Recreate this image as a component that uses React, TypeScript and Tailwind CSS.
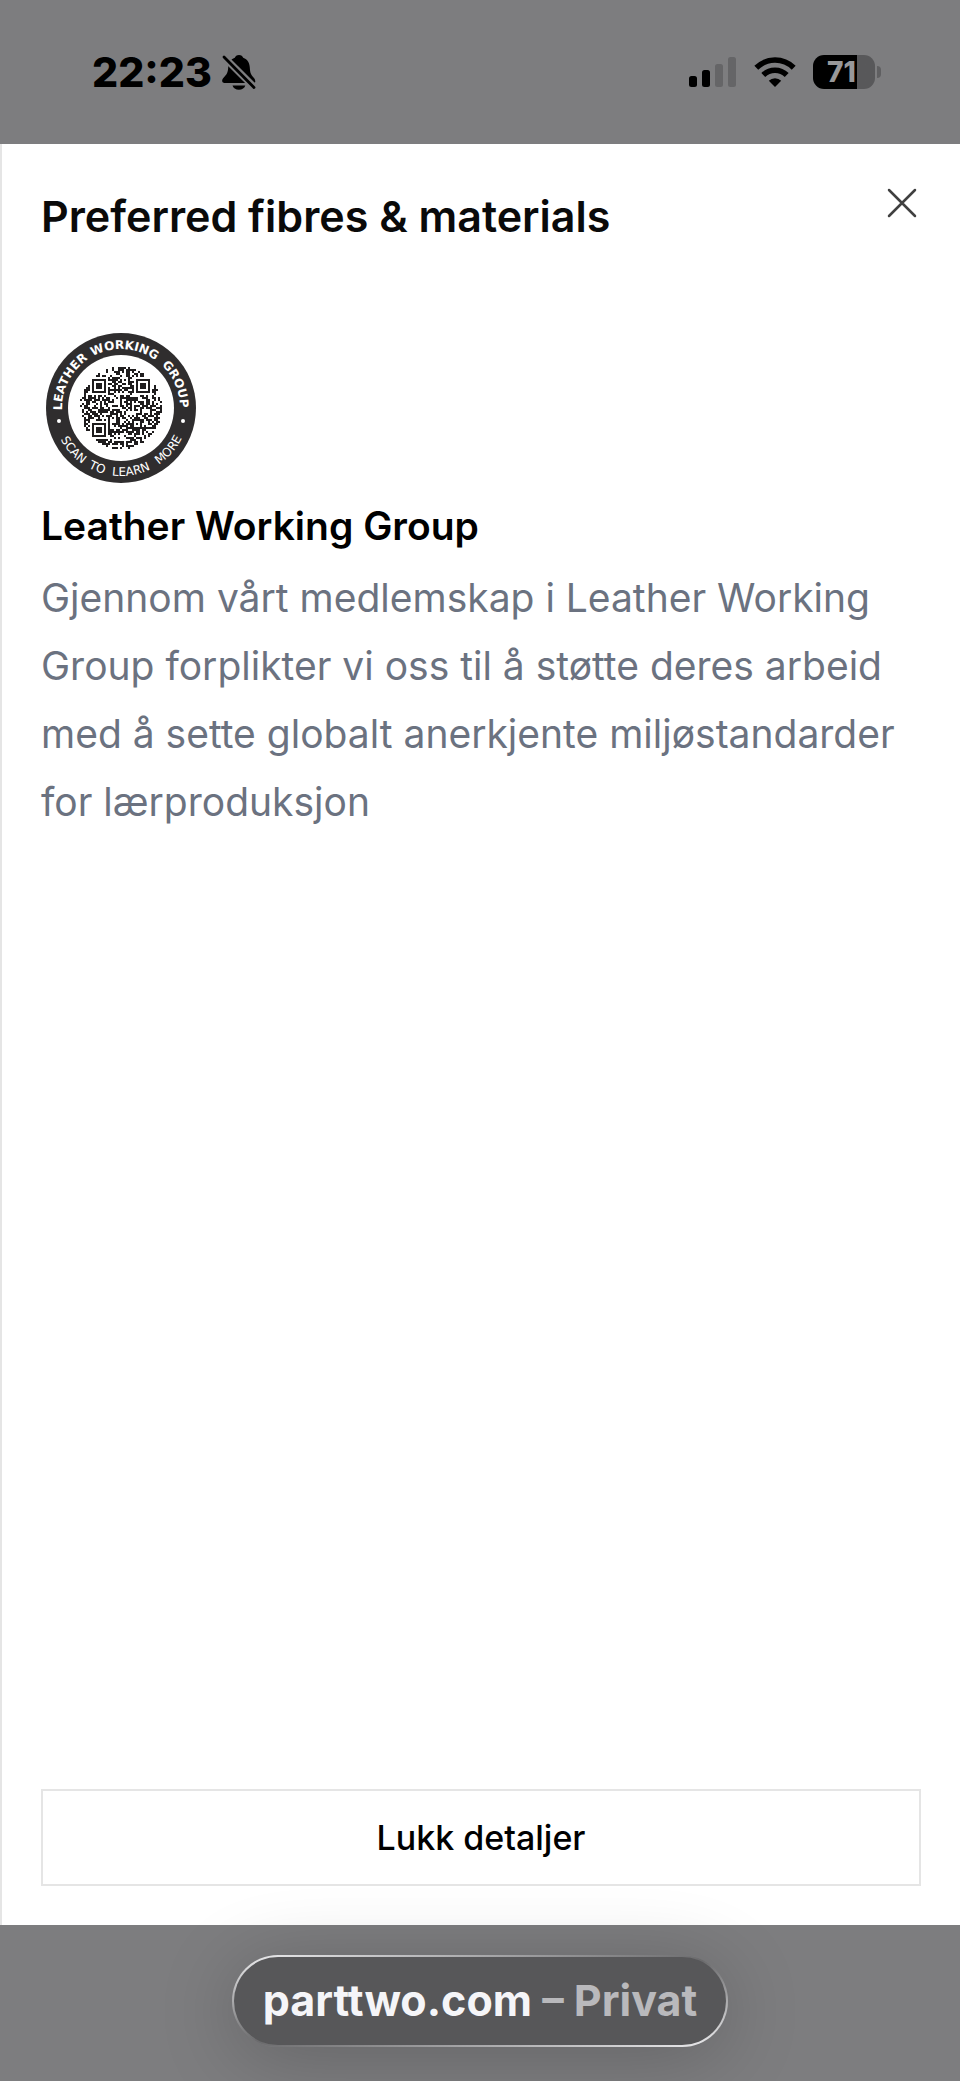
import React from 'react';

const QR_SIZE = 29;
const QR_MODULE = 2;
const QR_RADIUS = 41;

const FINDERS = [
    { x: 0, y: 0 },
    { x: 22, y: 0 },
    { x: 0, y: 22 },
];

// Returns null when the module is outside of the finder / alignment patterns
const patternModule = (col: number, row: number): boolean | null => {
    for (const f of FINDERS) {
        const d = Math.max(Math.abs(col - f.x - 3), Math.abs(row - f.y - 3));
        if (d <= 4) return d !== 2 && d !== 4;
    }
    const d = Math.max(Math.abs(col - 22), Math.abs(row - 22));
    if (d <= 2) return d !== 1;
    return null;
};

const buildQrPath = () => {
    let seed = 20;
    let path = '';
    for (let row = -7; row < QR_SIZE + 7; row++) {
        for (let col = -7; col < QR_SIZE + 7; col++) {
            seed = (seed * 1103515245 + 12345) % 2147483648;
            const x = 76 + (col - QR_SIZE / 2) * QR_MODULE;
            const y = 76 + (row - QR_SIZE / 2) * QR_MODULE;
            if (Math.hypot(x + 1 - 76, y + 1 - 76) > QR_RADIUS) continue;
            const dark = patternModule(col, row) ?? seed / 2147483648 < 0.54;
            if (dark) path += `M${x} ${y}h2v2h-2z`;
        }
    }
    return path;
};

const qrPath = buildQrPath();

const topWords = [
    { text: 'LEATHER', offset: '15%' },
    { text: 'WORKING', offset: '52%' },
    { text: 'GROUP', offset: '87%' },
];

const bottomWords = [
    { text: 'SCAN', offset: '23%' },
    { text: 'TO', offset: '38%' },
    { text: 'LEARN', offset: '55%' },
    { text: 'MORE', offset: '77%' },
];

const LeatherWorkingGroupLogo: React.FC = () => (
    <svg viewBox="0 0 152 152" className="size-[152px]" role="img" aria-label="Leather Working Group">
        <defs>
            <path id="lwg-top" d="M17 76A59 59 0 0 1 135 76" />
            <path id="lwg-bottom" d="M8 76A68 68 0 0 0 144 76" />
        </defs>
        <circle cx="76" cy="76" r="75" fill="#2f2d2e" />
        <circle cx="76" cy="76" r="53" fill="#fff" />
        <path d={qrPath} fill="#1f1d1e" shapeRendering="crispEdges" />
        <g fill="#fff" fontFamily="'DejaVu Sans', sans-serif" fontSize="12" textAnchor="middle">
            {topWords.map(word => (
                <text key={word.text} fontWeight="700">
                    <textPath href="#lwg-top" startOffset={word.offset}>{word.text}</textPath>
                </text>
            ))}
            {bottomWords.map(word => (
                <text key={word.text}>
                    <textPath href="#lwg-bottom" startOffset={word.offset}>{word.text}</textPath>
                </text>
            ))}
        </g>
        <circle cx="14" cy="89" r="2" fill="#fff" />
        <circle cx="138" cy="89" r="2" fill="#fff" />
    </svg>
);

const BellOffIcon: React.FC = () => (
    <svg viewBox="0 0 34 36" className="h-9 w-[34px]" aria-hidden="true">
        <path d="M17 1c-2.300 0-3.600 1.200-4.200 2.700C8.400 5.300 6.500 9 6.200 13.500 5.900 19 4.500 20.500 2 23.300.6 24.900 0 26 .2 27.300.4 28.600 1.300 29 2.500 29h28.800c1.300 0 2-.6 2-1.800 0-1.400-.7-2.400-2-3.900-2.500-2.800-3.200-4.500-3.500-9.800-.3-4.700-2.200-8.200-6.600-9.800C20.600 2.200 19.300 1 17 1z" />
        <path d="M10.500 31.500h12.800c-.6 2.600-3.200 4.300-6.400 4.300s-5.800-1.700-6.400-4.300z" />
        <path d="M.5 1.500 34 35" stroke="#7d7d7f" strokeWidth="7" />
        <path d="M2 3 32 33.500" stroke="#000" strokeWidth="2.800" strokeLinecap="round" />
    </svg>
);

const SignalIcon: React.FC = () => (
    <svg viewBox="0 0 48 30" className="h-[30px] w-12" aria-hidden="true">
        <rect x="0" y="19" width="8" height="11" rx="2.500" />
        <rect x="13" y="13" width="8" height="17" rx="2.500" />
        <rect x="26" y="7" width="8" height="23" rx="2.500" fill="#656567" />
        <rect x="39" y="0" width="8" height="30" rx="2.500" fill="#656567" />
    </svg>
);

const WifiIcon: React.FC = () => (
    <svg viewBox="0 0 42 30" className="h-[30px] w-[42px]" aria-hidden="true">
        <g fill="none" stroke="#000" strokeWidth="5.500">
            <path d="M2.300 10.800a26.500 26.500 0 0 1 37.400 0" />
            <path d="M9.300 18a16.500 16.500 0 0 1 23.400 0" />
        </g>
        <path d="M21 30l-6.200-6.300a8.800 8.800 0 0 1 12.400 0z" />
    </svg>
);

const BatteryIcon: React.FC = () => (
    <div className="flex items-center gap-0.5">
        <div className="flex h-[34px] w-[62px] items-center overflow-hidden rounded-[11px] bg-linear-to-r from-black from-71% to-[#58585a] to-71% pl-3.5">
            <span className="text-[28px] leading-none font-extrabold text-[#98989a]">71</span>
        </div>
        <div className="h-3 w-1 rounded-r-full bg-[#5f5f61]" />
    </div>
);

const StatusBar: React.FC = () => (
    <header className="flex h-36 items-center justify-between pr-[79px] pl-[92px]">
        <div className="flex items-center gap-2.5">
            <time className="text-[41px] leading-none font-extrabold text-black">22:23</time>
            <BellOffIcon />
        </div>
        <div className="flex items-center gap-[17px]">
            <SignalIcon />
            <WifiIcon />
            <BatteryIcon />
        </div>
    </header>
);

const App: React.FC = () => {
    return (
        <div className="flex min-h-screen flex-col bg-[#7d7d7f] font-['Inter',sans-serif]">
            <StatusBar />

            <main className="flex flex-1 flex-col border-l-2 border-[#e5e5e5] bg-white px-[39px] pt-10 pb-[39px]">
                <div className="flex items-start justify-between">
                    <h1 className="text-[43px] leading-16 font-semibold text-[#0a0a0a]">Preferred fibres &amp; materials</h1>
                    <button type="button" aria-label="Lukk" className="p-1">
                        <svg viewBox="0 0 30 30" className="size-[30px]" fill="none" stroke="#404040" strokeWidth="2.500" strokeLinecap="round">
                            <path d="M2 2l26 26M28 2L2 28" />
                        </svg>
                    </button>
                </div>

                <section className="mt-21">
                    <div className="pl-1">
                        <LeatherWorkingGroupLogo />
                    </div>
                    <h2 className="mt-3 text-[39px] leading-15 font-semibold text-black">Leather Working Group</h2>
                    <p className="mt-2 text-[39px] leading-[68px] text-[#6b7280]">
                        Gjennom vårt medlemskap i Leather Working Group forplikter vi oss til å støtte deres arbeid med å sette globalt anerkjente miljøstandarder for lærproduksjon
                    </p>
                </section>

                <button type="button" className="mt-auto h-[97px] w-full border-2 border-[#e5e5e5] text-[34px] font-medium text-black">
                    Lukk detaljer
                </button>
            </main>

            <footer className="flex h-39 items-center justify-center pb-1">
                <div className="rounded-full bg-linear-to-br from-[#f0f0f2] via-[#6a6a6c] to-[#f0f0f2] p-0.5 shadow-[0_10px_80px_rgba(0,0,0,0.2)]">
                    <a href="https://parttwo.com" className="flex h-22 items-center rounded-full bg-[#575759] px-[29px] pb-0.5 text-[43px] font-bold whitespace-pre text-[#f5f5f8]">
                        parttwo.com<span className="text-[#b9b9bc]"> – Privat</span>
                    </a>
                </div>
            </footer>
        </div>
    );
};

export default App;
